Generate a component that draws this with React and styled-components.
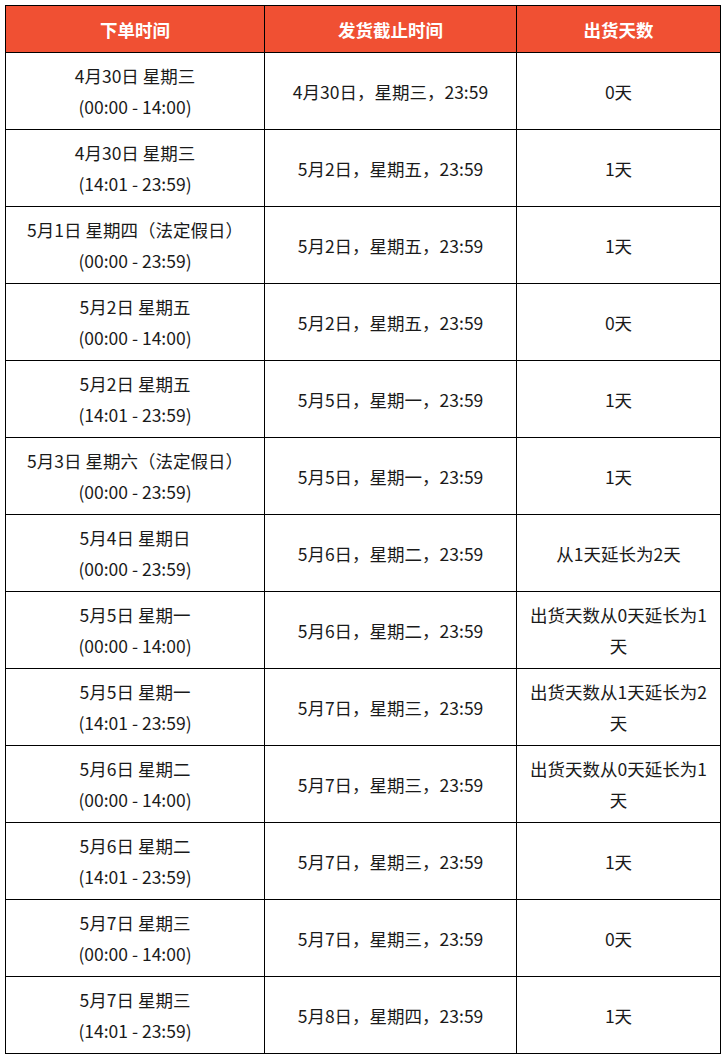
import React from "react";
import styled, { createGlobalStyle } from "styled-components";

const Global = createGlobalStyle`
  html, body {
    margin: 0;
    padding: 0;
    background: #ffffff;
  }
  body {
    font-family: "Noto Sans CJK SC", "Noto Sans", sans-serif;
    color: #1a1a1a;
  }
`;

const Page = styled.div`
  padding: 5px;
`;

const Table = styled.table`
  border-collapse: collapse;
  table-layout: fixed;
  width: 716px;
  font-size: 17.5px;
`;

const HeadCell = styled.th`
  width: ${p => p.w}px;
  height: 46px;
  padding: 0;
  border: 1px solid #000;
  background: #f05033;
  color: #ffffff;
  font-weight: 700;
  text-align: center;
  vertical-align: middle;
`;

const Cell = styled.td`
  height: 76px;
  padding: 0 10px;
  border: 1px solid #000;
  text-align: center;
  vertical-align: middle;
  line-height: 31px;
`;

const rows = [
  ["4月30日 星期三", "(00:00 - 14:00)", "4月30日，星期三，23:59", "0天"],
  ["4月30日 星期三", "(14:01 - 23:59)", "5月2日，星期五，23:59", "1天"],
  ["5月1日 星期四（法定假日）", "(00:00 - 23:59)", "5月2日，星期五，23:59", "1天"],
  ["5月2日 星期五", "(00:00 - 14:00)", "5月2日，星期五，23:59", "0天"],
  ["5月2日 星期五", "(14:01 - 23:59)", "5月5日，星期一，23:59", "1天"],
  ["5月3日 星期六（法定假日）", "(00:00 - 23:59)", "5月5日，星期一，23:59", "1天"],
  ["5月4日 星期日", "(00:00 - 23:59)", "5月6日，星期二，23:59", "从1天延长为2天"],
  ["5月5日 星期一", "(00:00 - 14:00)", "5月6日，星期二，23:59", "出货天数从0天延长为1天"],
  ["5月5日 星期一", "(14:01 - 23:59)", "5月7日，星期三，23:59", "出货天数从1天延长为2天"],
  ["5月6日 星期二", "(00:00 - 14:00)", "5月7日，星期三，23:59", "出货天数从0天延长为1天"],
  ["5月6日 星期二", "(14:01 - 23:59)", "5月7日，星期三，23:59", "1天"],
  ["5月7日 星期三", "(00:00 - 14:00)", "5月7日，星期三，23:59", "0天"],
  ["5月7日 星期三", "(14:01 - 23:59)", "5月8日，星期四，23:59", "1天"],
];

const App = () => {
  return (
    <Page>
      <Global />
      <Table>
        <thead>
          <tr>
            <HeadCell w={258}>下单时间</HeadCell>
            <HeadCell w={251}>发货截止时间</HeadCell>
            <HeadCell w={203}>出货天数</HeadCell>
          </tr>
        </thead>
        <tbody>
          {rows.map((r, i) => (
            <tr key={i}>
              <Cell>
                {r[0]}
                <br />
                {r[1]}
              </Cell>
              <Cell>{r[2]}</Cell>
              <Cell>{r[3]}</Cell>
            </tr>
          ))}
        </tbody>
      </Table>
    </Page>
  );
};

export default App;
